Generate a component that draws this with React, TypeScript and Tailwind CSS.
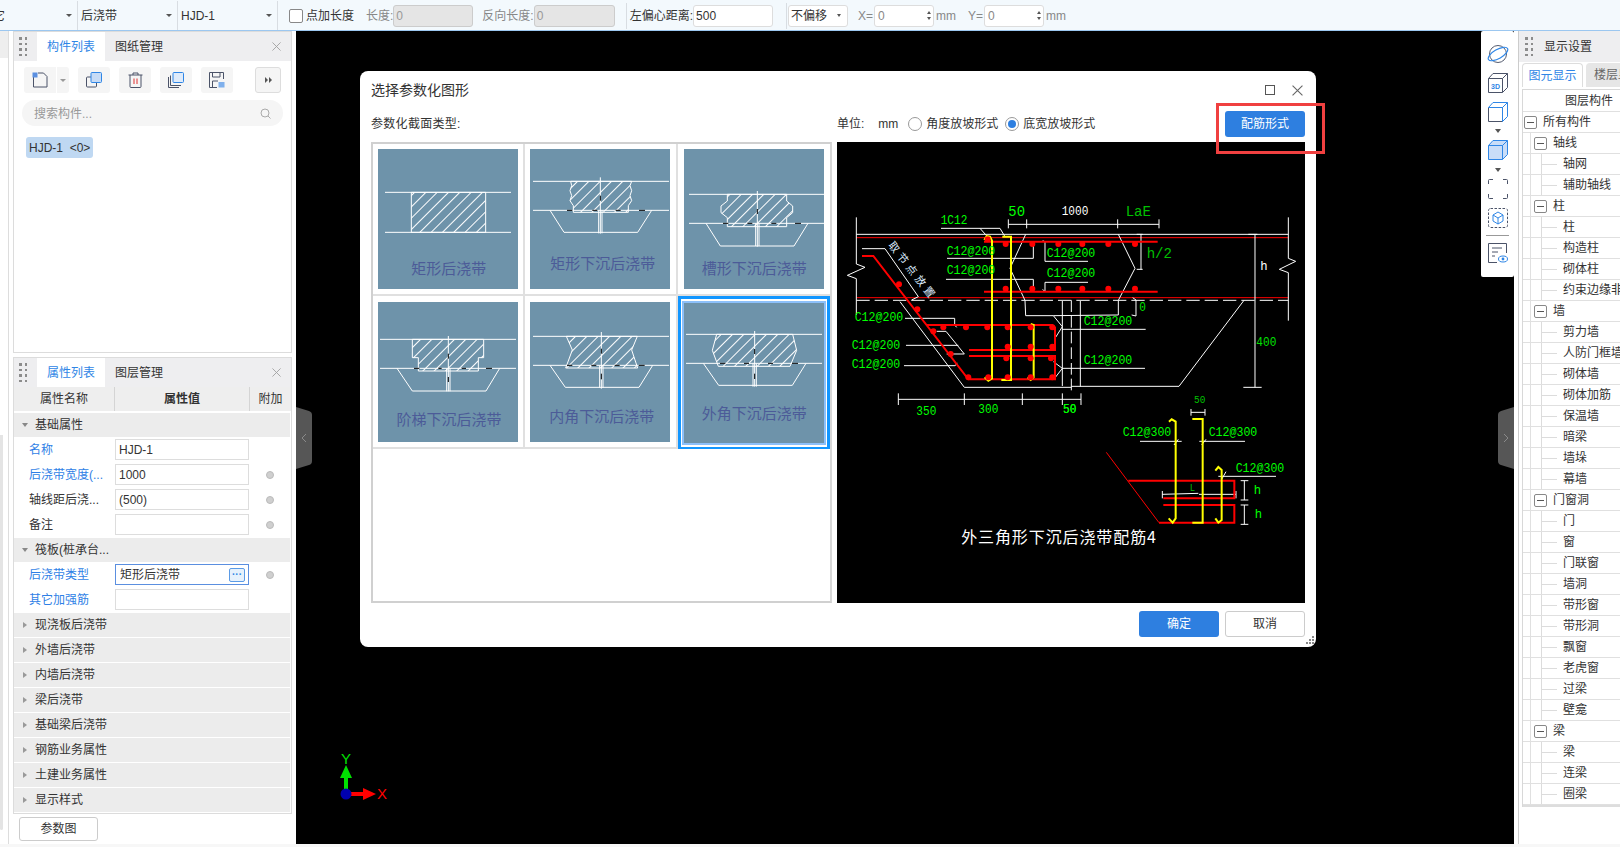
import React from "react";

const BLUE = "#2e7fe0";

// section thumbnails, coordinates are 3x of the 140px tile
const thumbs = [
  {
    label: "矩形后浇带", lx: 212, ly: 354,
    lines: [[21, 130, 399, 130], [21, 250, 399, 250]],
    hatch: "100,130 323,130 323,250 100,250",
    extra: "",
    dashes: [] as number[][],
  },
  {
    label: "矩形下沉后浇带", lx: 218, ly: 339,
    lines: [[9, 97, 417, 97], [9, 184, 417, 184], [211, 85, 211, 254], [206, 184, 206, 253], [216, 184, 216, 253]],
    hatch: "122,97 305,97 300,110 305,125 300,140 305,155 295,170 295,190 130,190 130,170 120,155 125,140 120,125 125,110",
    extra: "60,184 102,250 323,250 365,184",
    dashes: [[111, 184, 127, 184], [187, 184, 202, 184], [257, 184, 272, 184], [327, 184, 345, 184], [211, 140, 211, 155]],
  },
  {
    label: "槽形下沉后浇带", lx: 211, ly: 354,
    lines: [[15, 136, 420, 136], [15, 223, 420, 223], [220, 126, 220, 293], [215, 223, 215, 291], [225, 223, 225, 291]],
    hatch: "130,136 308,136 308,156 326,171 326,191 308,206 308,233 130,233 130,206 111,191 111,171 130,156",
    extra: "66,223 109,291 330,291 372,223",
    dashes: [[117, 223, 133, 223], [190, 223, 205, 223], [262, 223, 277, 223], [333, 223, 351, 223], [220, 180, 220, 195]],
  },
  {
    label: "阶梯下沉后浇带", lx: 213, ly: 350,
    lines: [[6, 112, 414, 112], [6, 199, 414, 199], [211, 102, 211, 268], [206, 199, 206, 268], [216, 199, 216, 268]],
    hatch: "103,112 317,112 317,167 301,167 301,207 121,207 121,167 103,167",
    extra: "57,199 103,267 324,267 365,199",
    dashes: [[108, 199, 124, 199], [181, 199, 191, 199], [251, 199, 264, 199], [324, 199, 342, 199], [211, 155, 211, 170], [211, 225, 211, 240]],
  },
  {
    label: "内角下沉后浇带", lx: 215, ly: 340,
    lines: [[9, 103, 417, 103], [9, 190, 417, 190], [214, 90, 214, 260], [209, 190, 209, 257], [219, 190, 219, 257]],
    hatch: "109,103 322,103 305,144 323,198 107,198 127,144",
    extra: "60,190 106,256 327,256 368,190",
    dashes: [[111, 190, 127, 190], [184, 190, 199, 190], [254, 190, 269, 190], [326, 190, 344, 190], [214, 140, 214, 155], [214, 215, 214, 232]],
  },
  {
    label: "外角下沉后浇带", lx: 211, ly: 327,
    lines: [[6, 94, 414, 94], [6, 181, 414, 181], [212, 84, 212, 251], [207, 181, 207, 251], [217, 181, 217, 251]],
    hatch: "98,94 326,94 338,142 318,190 103,190 85,142",
    extra: "58,181 104,247 325,247 366,181",
    dashes: [[108, 181, 124, 181], [180, 181, 195, 181], [252, 181, 267, 181], [324, 181, 342, 181], [212, 138, 212, 153], [212, 212, 212, 228]],
  },
];

function Thumb({ t, i }: { t: (typeof thumbs)[number]; i: number }) {
  return (
    <svg viewBox="0 0 420 420" className="block w-[140px] h-[140px] bg-[#6e93aa]">
      <defs>
        <pattern id={"hatch" + i} width="24" height="24" patternUnits="userSpaceOnUse" patternTransform="rotate(-45)">
          <line x1="0" y1="1.5" x2="24" y2="1.5" stroke="#fff" strokeWidth="3" />
        </pattern>
      </defs>
      <polygon points={t.hatch} fill={"url(#hatch" + i + ")"} stroke="#fff" strokeWidth="3" />
      {t.extra && <polyline points={t.extra} fill="none" stroke="#fff" strokeWidth="3" />}
      {t.lines.map((l, k) => (
        <line key={k} x1={l[0]} y1={l[1]} x2={l[2]} y2={l[3]} stroke="#fff" strokeWidth="3" />
      ))}
      {t.dashes.map((l, k) => (
        <line key={k} x1={l[0]} y1={l[1]} x2={l[2]} y2={l[3]} stroke="#000" strokeWidth="3" />
      ))}
      <text x={t.lx} y={t.ly} textAnchor="middle" dominantBaseline="central" fontSize="45" fill="#4c5b98" fontFamily="'Noto Sans CJK SC', sans-serif">
        {t.label}
      </text>
    </svg>
  );
}

function Cad({ x, y, s, w, fill = "#00ff00", size = 38 }: { x: number; y: number; s: string; w: number; fill?: string; size?: number }) {
  return (
    <text x={x} y={y} textAnchor="middle" dominantBaseline="central" fontSize={size} textLength={w} lengthAdjust="spacingAndGlyphs" fill={fill} fontFamily="'Liberation Mono', monospace">
      {s}
    </text>
  );
}

// white leader and dimension lines of the big drawing
const whiteLines = [
  "49,82 49,222 75,232 22,256 49,266 49,375",
  "1345,82 1345,205 1367,214 1318,238 1345,248 1345,392",
  "49,133 1345,133",
  "505,103 957,103", "505,88 505,115", "560,88 560,115", "833,88 833,115", "957,88 957,115",
  "303,115 420,115 445,143", "420,115 480,115 495,140",
  "557,133 510,235 555,331 557,377 640,377 667,410 645,445",
  "835,133 885,235 835,331 835,375 640,377",
  "321,205 580,205 580,162", "318,268 580,268 580,296",
  "608,152 615,155 615,214 744,214", "608,298 615,305 615,277 744,277",
  "195,385 344,385 344,405 350,412", "198,466 355,466", "192,527 345,527 352,520",
  "290,424 318,424 373,492 320,492",
  "667,418 917,418", "667,535 915,535", "640,515 667,535 640,570",
  "667,333 667,588", "721,333 721,590",
  "180,335 373,592 694,592", "694,589 1017,589 1212,331",
  "66,176 135,176 235,320 215,330",
  "903,133 903,238", "890,133 908,133", "890,238 908,238",
  "1245,133 1245,592", "1225,133 1252,133", "1210,592 1265,592",
  "878,323 888,330 888,378 875,375",
  "175,628 723,628", "175,610 175,645", "373,610 373,645", "547,610 547,645", "667,610 667,645", "723,610 723,645",
];
const redThin = ["49,143 1345,143", "49,323 1345,323"];
const redThick = [
  "432,155 953,155", "432,305 953,305",
  "66,198 100,198 385,568 645,568 645,498 387,498",
  "258,405 637,405 645,412 645,480 387,480",
];
const dots = [
  [443, 148], [497, 162], [577, 162], [655, 162], [727, 162], [805, 162], [885, 162],
  [497, 296], [577, 296], [655, 296], [727, 296], [805, 296], [885, 296],
  [177, 283], [232, 358], [280, 424], [332, 492], [385, 562],
  [310, 412], [378, 412], [442, 412], [503, 412], [572, 412], [637, 412],
  [503, 470], [572, 470], [637, 470], [499, 505], [572, 505], [633, 505],
  [445, 562], [503, 562], [572, 562], [637, 562],
];
const yellow = [
  "433,150 440,138 450,140 456,152 456,565 445,572 434,562",
  "487,140 513,140 513,570 484,570",
  "572,402 581,405 581,562 572,570 563,562",
];
const labels: [number, number][] = [
  [393, 184], [393, 243], [693, 192], [693, 252], [117, 382], [108, 466], [108, 523], [804, 394], [804, 511],
];

// small detail at the lower right, coordinates of the second crop
const w2 = [
  "420,154 545,154", "598,154 735,154", "655,259 828,259",
  "487,313 595,310", "597,313 708,313", "487,303 487,325", "708,303 708,325",
  "573,67 615,67", "573,57 573,77", "615,57 615,77",
  "733,272 733,330", "722,272 745,272", "722,330 745,330",
  "733,345 733,403", "722,345 745,345", "722,403 745,403",
  "522,165 535,148", "605,165 618,148", "665,268 678,245",
];
const r2 = [
  "385,272 703,272 703,325 490,325", "490,345 703,345 703,398 477,398",
];
const y2 = [
  "507,95 515,88 527,95 527,385 518,398 506,385",
  "577,87 608,87 608,398 577,398",
  "646,242 655,231 665,240 665,390 655,398 646,385",
];

function Drawing() {
  return (
    <svg viewBox="837 142 468 461" className="block w-[468px] h-[461px] bg-black">
      <g transform="translate(840 190) scale(0.33333)">
        {redThin.map((p) => <polyline key={p} points={p} fill="none" stroke="#ff0000" strokeWidth="3" />)}
        <line x1="49" y1="331" x2="1345" y2="331" stroke="#fff" strokeWidth="3" strokeDasharray="40 15" />
        {whiteLines.map((p) => <polyline key={p} points={p} fill="none" stroke="#fff" strokeWidth="3" />)}
        <line x1="694" y1="331" x2="694" y2="605" stroke="#fff" strokeWidth="3" strokeDasharray="35 12" />
        {redThick.map((p) => <polyline key={p} points={p} fill="none" stroke="#ff0000" strokeWidth="6" />)}
        {yellow.map((p) => <polyline key={p} points={p} fill="none" stroke="#ffff00" strokeWidth="6" />)}
        {dots.map((d, i) => <circle key={i} cx={d[0]} cy={d[1]} r="9" fill="#ff0000" />)}
        {labels.map((l, i) => <Cad key={i} x={l[0]} y={l[1]} s="C12@200" w={146} />)}
        <Cad x={530} y={66} s="50" w={50} size={44} />
        <Cad x={705} y={66} s="1000" w={80} fill="#fff" />
        <Cad x={895} y={65} s="LaE" w={76} size={46} fill="#00c000" />
        <Cad x={342} y={92} s="1C12" w={80} />
        <Cad x={958} y={192} s="h/2" w={76} size={46} fill="#00c000" />
        <Cad x={1272} y={230} s="h" w={22} fill="#fff" />
        <Cad x={1279} y={457} s="400" w={60} fill="#00e000" />
        <Cad x={908} y={354} s="0" w={20} fill="#00e000" />
        <Cad x={259} y={666} s="350" w={60} />
        <Cad x={445} y={660} s="300" w={60} />
        <Cad x={689} y={660} s="50" w={40} />
        <Cad x={1079} y={630} s="50" w={34} size={32} fill="#00c000" />
        <text transform="translate(220 242) rotate(52)" textAnchor="middle" dominantBaseline="central" fontSize="32" letterSpacing="11" fill="#dcecff" fontFamily="'Noto Sans CJK SC', sans-serif">
          取节点放置
        </text>
      </g>
      <g transform="translate(1000 390) scale(0.33333)">
        <line x1="319" y1="187" x2="477" y2="398" stroke="#ff0000" strokeWidth="3" />
        {w2.map((p) => <polyline key={p} points={p} fill="none" stroke="#fff" strokeWidth="3" />)}
        {r2.map((p) => <polyline key={p} points={p} fill="none" stroke="#ff0000" strokeWidth="6" />)}
        {y2.map((p) => <polyline key={p} points={p} fill="none" stroke="#ffff00" strokeWidth="6" />)}
        <Cad x={441} y={127} s="C12@300" w={146} />
        <Cad x={699} y={127} s="C12@300" w={146} />
        <Cad x={780} y={236} s="C12@300" w={146} />
        <Cad x={577} y={293} s="L" w={16} size={32} fill="#00c000" />
        <Cad x={772} y={302} s="h" w={22} />
        <Cad x={775} y={374} s="h" w={22} />
        <Cad x={209} y={60} s="50" w={40} />
      </g>
      <text x="1059" y="536" textAnchor="middle" dominantBaseline="central" fontSize="16" letterSpacing="0.9" fill="#fff" fontFamily="'Noto Sans CJK SC', sans-serif">
        外三角形下沉后浇带配筋4
      </text>
    </svg>
  );
}

function Grip() {
  return (
    <div className="grid grid-cols-2 gap-x-[3px] gap-y-[3px] w-[8px]">
      {[0, 1, 2, 3, 4, 5, 6, 7].map((i) => <span key={i} className="w-[2.5px] h-[2.5px] bg-[#8c8c8c]" />)}
    </div>
  );
}

function CloseX({ size = 9, color = "#a0a0a0" }: { size?: number; color?: string }) {
  return (
    <svg width={size} height={size} viewBox="0 0 10 10" className="shrink-0">
      <path d="M0.5 0.5L9.5 9.5M9.5 0.5L0.5 9.5" stroke={color} strokeWidth="1" fill="none" />
    </svg>
  );
}

function PanelHeader({ active, other }: { active: string; other: string }) {
  return (
    <div className="flex items-stretch h-[29px] bg-[#eeeef0] shrink-0 text-[12px]">
      <div className="flex items-center pl-[5px] w-[23px]"><Grip /></div>
      <div className="flex items-center justify-center w-[68px] bg-white text-[#2f86e6]">{active}</div>
      <div className="flex items-center pl-[10px] text-[#333]">{other}</div>
      <div className="flex items-center ml-auto pr-[10px]"><CloseX /></div>
    </div>
  );
}

function ToolBtn({ children }: { children: React.ReactNode }) {
  return <div className="flex items-center justify-center w-[32px] h-[26px] bg-[#f5f5f5] rounded-[3px]">{children}</div>;
}

const ink = "#4b5368";

function ComponentPanel() {
  return (
    <div className="flex flex-col h-[322px] border border-[#dcdcdc] bg-white">
      <PanelHeader active="构件列表" other="图纸管理" />
      <div className="flex items-center pl-[10px] pt-[6px]">
        <div className="flex w-[45px] h-[26px] mr-[9px]">
          <div className="flex items-center justify-center w-[32px] bg-[#f5f5f5] rounded-l-[3px]">
            <svg width="16" height="16" viewBox="0 0 16 16">
              <path d="M1.5 5V15H15V4.5L11.5 1H6" fill="none" stroke={ink} />
              <rect x="0.5" y="0.5" width="5" height="5" fill="#5b8fe0" />
            </svg>
          </div>
          <div className="flex items-center justify-center flex-1 ml-[1px] bg-[#f5f5f5] rounded-r-[3px]">
            <span className="border-x-[3px] border-x-transparent border-t-[3px] border-t-[#999]" />
          </div>
        </div>
        <div className="flex gap-[9px]">
          <ToolBtn>
            <svg width="16" height="16" viewBox="0 0 16 16">
              <rect x="0.5" y="5" width="10" height="10" rx="1" fill="none" stroke={ink} />
              <rect x="5" y="0.5" width="10.5" height="10" rx="1" fill="#c6dbf6" stroke="#2f86e6" />
            </svg>
          </ToolBtn>
          <ToolBtn>
            <svg width="15" height="16" viewBox="0 0 15 16">
              <path d="M0.5 3H14.5M5 3V1H10V3M2 3V14.5A1 1 0 003 15.5H12A1 1 0 0013 14.5V3" fill="none" stroke={ink} />
              <path d="M6 6.5V12M9 6.5V12" stroke="#e03030" />
            </svg>
          </ToolBtn>
          <ToolBtn>
            <svg width="16" height="16" viewBox="0 0 16 16">
              <path d="M0.5 5V15.5H11M2.5 3.5V13.5H13" fill="none" stroke={ink} />
              <rect x="5" y="0.5" width="10.5" height="10" rx="1" fill="#dfebfa" stroke="#2f86e6" />
            </svg>
          </ToolBtn>
          <ToolBtn>
            <svg width="16" height="16" viewBox="0 0 16 16">
              <path d="M14.5 7V0.5H0.5V15.5H8" fill="none" stroke={ink} />
              <path d="M3.5 0.5V5H11V0.5M3.5 15.5V9H9" fill="none" stroke={ink} />
              <rect x="9.5" y="10" width="6" height="5.5" fill="#7fb0ec" />
            </svg>
          </ToolBtn>
        </div>
        <div className="flex items-center justify-center gap-[1px] w-[26px] h-[26px] ml-[22px] bg-[#f5f5f5] border border-[#ddd] rounded-[3px]">
          <span className="border-y-[3px] border-y-transparent border-l-[3px] border-l-[#555]" />
          <span className="border-y-[3px] border-y-transparent border-l-[3px] border-l-[#555]" />
        </div>
      </div>
      <div className="flex items-center h-[26px] mx-[8px] mt-[7px] pl-[12px] pr-[12px] pt-[1px] bg-[#f5f5f5] rounded-full text-[12px] text-[#999]">
        <span>搜索构件...</span>
        <svg width="11" height="11" viewBox="0 0 11 11" className="ml-auto">
          <circle cx="5" cy="5" r="4" fill="none" stroke="#aaa" />
          <path d="M8 8L10.5 10.5" stroke="#aaa" />
        </svg>
      </div>
      <div className="flex items-center self-start h-[21px] ml-[12px] mt-[11px] px-[3px] bg-[#bfd8f2] rounded-[3px] text-[12px] text-[#333] whitespace-pre">
        {"HJD-1  <0>"}
      </div>
    </div>
  );
}

function Section({ title, open }: { title: string; open?: boolean }) {
  return (
    <div className="flex items-center h-[24px] mb-[1px] w-[276px] shrink-0 bg-[#ececec] text-[12px] text-[#333]">
      <div className="flex items-center justify-center w-[21px]">
        {open ? (
          <span className="border-x-[3px] border-x-transparent border-t-[4px] border-t-[#888]" />
        ) : (
          <span className="border-y-[3px] border-y-transparent border-l-[4px] border-l-[#999]" />
        )}
      </div>
      <span>{title}</span>
    </div>
  );
}

function Row({ name, value, link, dot, children }: { name: string; value?: string; link?: boolean; dot?: boolean; children?: React.ReactNode }) {
  return (
    <div className="flex items-center h-[25px] pb-[2px] shrink-0 text-[12px]">
      <div className={"w-[101px] pl-[15px] whitespace-nowrap " + (link ? "text-[#2f7fe6]" : "text-[#333]")}>{name}</div>
      {children ?? (
        <div className="flex items-center w-[134px] h-[21px] pl-[3px] border border-[#ddd] text-[#333]">{value}</div>
      )}
      <div className="flex justify-center w-[41px]">
        {dot && <span className="w-[8px] h-[8px] rounded-full bg-[#cfcfcf] border border-[#bbb]" />}
      </div>
    </div>
  );
}

function PropertyPanel() {
  return (
    <div className="flex flex-col h-[457px] border border-[#dcdcdc] bg-white">
      <PanelHeader active="属性列表" other="图层管理" />
      <div className="flex h-[24px] mb-[2px] shrink-0 w-[277px] bg-[#eeeeee] text-[12px] text-[#333]">
        <div className="flex items-center justify-center w-[101px] border-r border-[#d4d4d4]">属性名称</div>
        <div className="flex items-center justify-center w-[135px] border-r border-[#d4d4d4] font-bold">属性值</div>
        <div className="flex items-center justify-center w-[41px]">附加</div>
      </div>
      <Section title="基础属性" open />
      <Row name="名称" value="HJD-1" link />
      <Row name="后浇带宽度(..." value="1000" link dot />
      <Row name="轴线距后浇..." value="(500)" dot />
      <Row name="备注" dot />
      <Section title="筏板(桩承台..." open />
      <Row name="后浇带类型" link dot>
        <div className="flex items-center justify-between w-[134px] h-[21px] pl-[4px] pr-[3px] border border-[#5b8fe0] text-[#333]">
          <span>矩形后浇带</span>
          <span className="flex items-center justify-center w-[16px] h-[14px] rounded-[2px] bg-[#e6f1fc] border border-[#5b9be6] text-[#2f86e6] text-[10px] leading-none font-bold">···</span>
        </div>
      </Row>
      <Row name="其它加强筋" link />
      {["现浇板后浇带", "外墙后浇带", "内墙后浇带", "梁后浇带", "基础梁后浇带", "钢筋业务属性", "土建业务属性", "显示样式"].map((s) => (
        <Section key={s} title={s} />
      ))}
    </div>
  );
}

function LeftSidebar() {
  return (
    <div className="flex w-[296px] h-full shrink-0 bg-white">
      <div className="w-[9px] border-r border-[#ddd] h-full">
        <div className="h-[27px] bg-[#eeeeee]" />
        <div className="w-[3px] h-[395px] mt-[377px] bg-[#e4e4e4] rounded-b-[2px]" />
      </div>
      <div className="flex flex-col w-[279px] ml-[4px]">
        <ComponentPanel />
        <div className="h-[4px]" />
        <PropertyPanel />
        <div className="flex items-center justify-center w-[79px] h-[24px] ml-[6px] mt-[3px] bg-white border border-[#ccc] rounded-[3px] text-[12px] text-[#333]">参数图</div>
      </div>
    </div>
  );
}

function Radio({ on }: { on?: boolean }) {
  return (
    <span className="flex items-center justify-center w-[14px] h-[14px] rounded-full bg-white border border-[#999] shrink-0">
      {on && <span className="w-[8px] h-[8px] rounded-full bg-[#2e7fe0]" />}
    </span>
  );
}

function Dialog() {
  return (
    <div className="absolute left-[64px] top-[40px] w-[956px] h-[576px] flex flex-col px-[11px] bg-white rounded-[8px] text-[12px] text-[#333]">
      <div className="flex items-center h-[38px] shrink-0">
        <span className="text-[14px]">选择参数化图形</span>
        <div className="flex items-center gap-[17px] ml-auto mr-[2px]">
          <span className="w-[10px] h-[10px] border border-[#555]" />
          <CloseX size={11} color="#666" />
        </div>
      </div>
      <div className="flex gap-[5px] flex-1 min-h-0">
        <div className="flex flex-col w-[461px]">
          <div className="flex items-center h-[30px] mb-[3px] text-[12px] tracking-[0.3px]">参数化截面类型:</div>
          <div className="h-[461px] border-2 border-[#d0d0d0] border-r-[#d8d8d8]">
            <div className="grid grid-cols-3 w-[457px]">
              {thumbs.map((t, i) => (
                <div key={t.label} className={"flex items-center justify-center border-b-2 border-[#e0e0e0] " + (i < 3 ? "h-[152px] " : "h-[153px] ") + (i % 3 < 2 ? "border-r-2 " : "") + (i === 5 ? "border-[3px] !border-[#1296ff] " : "")}>
                  {i === 5 ? (
                    <div className="border-[2px] border-[#8cc0fa]"><Thumb t={t} i={i} /></div>
                  ) : (
                    <Thumb t={t} i={i} />
                  )}
                </div>
              ))}
            </div>
          </div>
        </div>
        <div className="flex flex-col w-[468px]">
          <div className="flex items-center h-[26px] mt-[2px] mb-[5px]">
            <span>单位:</span>
            <span className="ml-[14px] mr-[10px]">mm</span>
            <Radio />
            <span className="ml-[4px] mr-[7px]">角度放坡形式</span>
            <Radio on />
            <span className="ml-[4px]">底宽放坡形式</span>
            <button className="ml-auto w-[80px] h-[26px] rounded-[3px] bg-[#2e7fe0] text-white text-[12px]">配筋形式</button>
          </div>
          <Drawing />
        </div>
      </div>
      <div className="flex justify-end gap-[6px] h-[44px] pt-[8px] shrink-0">
        <button className="w-[80px] h-[26px] rounded-[3px] text-white text-[12px]" style={{ background: BLUE }}>确定</button>
        <button className="w-[80px] h-[26px] rounded-[3px] bg-white border border-[#ccc] text-[12px]">取消</button>
      </div>
      <svg width="9" height="9" viewBox="0 0 9 9" className="absolute right-[2px] bottom-[2px]">
        <path d="M7 0h2v2H7zM4 3h2v2H4zM7 3h2v2H7zM1 6h2v2H1zM4 6h2v2H4zM7 6h2v2H7z" fill="#888" />
      </svg>
    </div>
  );
}

function AxisMark() {
  return (
    <svg width="60" height="60" viewBox="0 0 60 60" className="absolute left-[33px] bottom-[34px]">
      <path d="M17 40V26" stroke="#00e000" strokeWidth="4" />
      <path d="M17 15L23 28H11Z" fill="#00e000" />
      <path d="M17 44H36" stroke="#ff0000" strokeWidth="4" />
      <path d="M47 44L34 38V50Z" fill="#ff0000" />
      <circle cx="17" cy="44" r="5.5" fill="#0000b0" />
      <text x="17" y="14" textAnchor="middle" fontSize="15" fill="#00e000" fontFamily="'Liberation Sans', sans-serif">Y</text>
      <text x="53" y="49" textAnchor="middle" fontSize="15" fill="#ff0000" fontFamily="'Liberation Sans', sans-serif">X</text>
    </svg>
  );
}

function IconStrip() {
  return (
    <div className="absolute right-0 top-0 flex flex-col items-center w-[33px] h-[246px] pt-[13px] bg-white rounded-[2px]">
      <svg width="22" height="20" viewBox="0 0 22 20">
        <circle cx="11" cy="10" r="8.5" fill="none" stroke="#555c70" />
        <ellipse cx="11" cy="10" rx="11" ry="4.5" fill="none" stroke="#2f86e6" strokeWidth="1.2" transform="rotate(-30 11 10)" />
      </svg>
      <svg width="20" height="20" viewBox="0 0 20 20" className="mt-[9px]">
        <path d="M0.5 5.5H14.5V19.5H0.5ZM0.5 5.5L5 0.5H19.5V14.5L14.5 19.5M14.5 5.5L19.5 0.5" fill="none" stroke={ink} />
        <text x="7.5" y="16" textAnchor="middle" fontSize="7" fontWeight="bold" fill="#2f86e6" fontFamily="'Liberation Sans', sans-serif">3D</text>
      </svg>
      <svg width="20" height="20" viewBox="0 0 20 20" className="mt-[9px]">
        <path d="M0.5 5.5V19.5H14.5V5.5" fill="none" stroke={ink} />
        <path d="M0.5 5.5L5 0.5H19.5V14.5L14.5 19.5V5.5H0.5M14.5 5.5L19.5 0.5" fill="none" stroke="#2f86e6" />
      </svg>
      <span className="mt-[7px] border-x-[3px] border-x-transparent border-t-[4px] border-t-[#555]" />
      <svg width="20" height="20" viewBox="0 0 20 20" className="mt-[7px]">
        <path d="M0.5 5.5L5 0.5H19.5V14.5L14.5 19.5H0.5Z" fill="#c9ddf8" stroke="#2f86e6" />
        <path d="M0.5 5.5H14.5V19.5M14.5 5.5L19.5 0.5" fill="none" stroke="#2f86e6" />
      </svg>
      <span className="mt-[8px] border-x-[3px] border-x-transparent border-t-[4px] border-t-[#555]" />
      <svg width="20" height="20" viewBox="0 0 20 20" className="mt-[7px]">
        <path d="M0.5 5V1.5A1 1 0 011.5 0.5H5M15 0.5H18.5A1 1 0 0119.5 1.5V5M19.5 15V18.5A1 1 0 0118.5 19.5H15M5 19.5H1.5A1 1 0 010.5 18.5V15" fill="none" stroke={ink} />
      </svg>
      <svg width="20" height="20" viewBox="0 0 20 20" className="mt-[9px]">
        <rect x="0.5" y="0.5" width="19" height="19" rx="2" fill="none" stroke={ink} strokeDasharray="2.5 1.5" />
        <path d="M10 4L15 7V13L10 16L5 13V7ZM5 7L10 10L15 7M10 10V16" fill="none" stroke="#2f86e6" />
      </svg>
      <div className="w-[23px] h-[1px] mt-[7px] bg-[#999]" />
      <svg width="20" height="20" viewBox="0 0 20 20" className="mt-[7px]">
        <path d="M9 19.5H0.5V0.5H18.5V10" fill="none" stroke={ink} />
        <path d="M4 5H14M4 9H10M4 13H7" stroke={ink} />
        <ellipse cx="15" cy="16" rx="4.5" ry="3" fill="#fff" stroke="#2f86e6" />
        <circle cx="15" cy="16" r="1.4" fill="#2f86e6" />
      </svg>
    </div>
  );
}

// side handles on the canvas edge
function Handle({ side }: { side: "left" | "right" }) {
  const left = side === "left";
  return (
    <svg width="16" height="62" viewBox="0 0 16 62" className={"absolute top-[376px] " + (left ? "left-0" : "right-0")}>
      <path d={left ? "M0 0L13 4Q16 5 16 8V54Q16 57 13 58L0 62Z" : "M16 0L3 4Q0 5 0 8V54Q0 57 3 58L16 62Z"} fill="#565656" />
      <path d={left ? "M10 27L6 31L10 35" : "M6 27L10 31L6 35"} fill="none" stroke="#8a8a8a" />
    </svg>
  );
}

const tree: [number, string][] = [
  [0, "所有构件"], [1, "轴线"], [2, "轴网"], [2, "辅助轴线"], [1, "柱"], [2, "柱"], [2, "构造柱"], [2, "砌体柱"], [2, "约束边缘非阴影区"],
  [1, "墙"], [2, "剪力墙"], [2, "人防门框墙"], [2, "砌体墙"], [2, "砌体加筋"], [2, "保温墙"], [2, "暗梁"], [2, "墙垛"], [2, "幕墙"],
  [1, "门窗洞"], [2, "门"], [2, "窗"], [2, "门联窗"], [2, "墙洞"], [2, "带形窗"], [2, "带形洞"], [2, "飘窗"], [2, "老虎窗"], [2, "过梁"], [2, "壁龛"],
  [1, "梁"], [2, "梁"], [2, "连梁"], [2, "圈梁"],
];

function MinusBox() {
  return (
    <span className="flex items-center justify-center w-[13px] h-[13px] shrink-0 bg-white border border-[#888] rounded-[2px]">
      <span className="w-[7px] h-[1px] bg-[#555]" />
    </span>
  );
}

function TreeRow({ level, text }: { level: number; text: string }) {
  return (
    <div className="relative flex items-center h-[21px] border-b border-[#e0e0e0] whitespace-nowrap text-[12px] text-[#333]">
      {level > 0 && <span className="absolute left-[7px] top-0 bottom-0 w-[1px] bg-[#e0e0e0]" />}
      {level === 2 && (
        <>
          <span className="absolute left-[18px] top-0 bottom-0 w-[1px] bg-[#dcdcdc]" />
          <span className="absolute left-[18px] top-[10px] w-[16px] h-[1px] bg-[#dcdcdc]" />
        </>
      )}
      {level === 0 && <span className="ml-[1px] mr-[6px] flex"><MinusBox /></span>}
      {level === 1 && <span className="ml-[11px] mr-[6px] z-10 flex"><MinusBox /></span>}
      <span className={level === 2 ? "ml-[40px]" : ""}>{text}</span>
    </div>
  );
}

function RightPanel() {
  return (
    <div className="flex w-[106px] h-full shrink-0 pl-[4px] bg-white">
      <div className="flex flex-col w-[102px] h-full bg-white border-l border-[#ccc] overflow-hidden">
        <div className="flex items-center h-[31px] shrink-0 pl-[6px] bg-[#eeeef0] text-[12px] text-[#333]">
          <Grip />
          <span className="ml-[11px] whitespace-nowrap">显示设置</span>
        </div>
        <div className="flex h-[24px] mt-[1px] pl-[3px] shrink-0 text-[12px] whitespace-nowrap">
          <div className="flex items-center justify-center w-[61px] shrink-0 border border-[#ddd] border-b-0 rounded-t-[4px] text-[#2f86e6]">图元显示</div>
          <div className="flex items-center pl-[8px] ml-[3px] w-[60px] shrink-0 bg-[#e6e6e6] rounded-t-[4px] text-[#666]">楼层显示</div>
        </div>
        <div className="ml-[3px] mt-[2px] border-l border-t border-[#d8d8d8]">
          <div className="flex items-center h-[22px] pl-[42px] border-b border-[#e0e0e0] text-[12px] text-[#333] whitespace-nowrap">图层构件</div>
          {tree.map((r, i) => <TreeRow key={i} level={r[0]} text={r[1]} />)}
          <div className="h-[2px] bg-[#dddddd]" />
        </div>
      </div>
    </div>
  );
}

function Sep() {
  return <span className="w-[1px] h-[29px] bg-[#d8dde2] shrink-0" />;
}

function Combo({ text, w }: { text: string; w: string }) {
  return (
    <div className={"flex items-center justify-between h-[29px] pl-[3px] pr-[5px] shrink-0 " + w}>
      <span>{text}</span>
      <span className="border-x-[3px] border-x-transparent border-t-[3px] border-t-[#555]" />
    </div>
  );
}

function Num({ v }: { v: string }) {
  return (
    <div className="flex items-center justify-between w-[60px] h-[22px] pl-[3px] pr-[2px] bg-white border border-[#ddd] rounded-[3px] text-[#888]">
      <span>{v}</span>
      <span className="flex flex-col gap-[3px]">
        <span className="border-x-[2.5px] border-x-transparent border-b-[3px] border-b-[#555]" />
        <span className="border-x-[2.5px] border-x-transparent border-t-[3px] border-t-[#555]" />
      </span>
    </div>
  );
}

function TopBar() {
  return (
    <div className="flex items-center h-[31px] shrink-0 pt-[1px] bg-[#f3f9fd] border-b border-[#9cc7f0] text-[12px] text-[#333] whitespace-nowrap overflow-hidden">
      <div className="flex items-center justify-between w-[77px] h-[29px] pr-[5px] shrink-0">
        <span className="-ml-[7px]">它</span>
        <span className="border-x-[3px] border-x-transparent border-t-[3px] border-t-[#555]" />
      </div>
      <Sep />
      <Combo text="后浇带" w="w-[99px]" />
      <Sep />
      <Combo text="HJD-1" w="w-[99px]" />
      <Sep />
      <span className="w-[14px] h-[14px] ml-[11px] bg-white border border-[#888] rounded-[2px] shrink-0" />
      <span className="ml-[3px]">点加长度</span>
      <span className="ml-[12px] text-[#888]">长度:</span>
      <span className="flex items-center w-[80px] h-[22px] pl-[2px] bg-[#e5e5e5] border border-[#ccc] rounded-[3px] text-[#999]">0</span>
      <span className="ml-[9px] text-[#888]">反向长度:</span>
      <span className="flex items-center w-[81px] h-[22px] pl-[2px] bg-[#e5e5e5] border border-[#ccc] rounded-[3px] text-[#999]">0</span>
      <span className="w-[1px] h-[26px] ml-[11px] bg-[#d8dde2]" />
      <span className="ml-[3px]">左偏心距离:</span>
      <span className="flex items-center w-[80px] h-[22px] pl-[2px] bg-white border border-[#ddd] rounded-[3px]">500</span>
      <span className="w-[1px] h-[26px] ml-[13px] bg-[#d8dde2]" />
      <span className="flex items-center justify-between w-[60px] h-[22px] ml-[1px] pl-[2px] pr-[6px] bg-white border border-[#ddd] rounded-[3px]">
        不偏移
        <span className="border-x-[2.5px] border-x-transparent border-t-[3px] border-t-[#555]" />
      </span>
      <span className="ml-[10px] mr-[1px] text-[#888]">X=</span>
      <Num v="0" />
      <span className="ml-[2px] text-[#888]">mm</span>
      <span className="ml-[12px] mr-[1px] text-[#888]">Y=</span>
      <Num v="0" />
      <span className="ml-[2px] text-[#888]">mm</span>
    </div>
  );
}

export default function App() {
  return (
    <div className="flex flex-col w-[1620px] h-[847px] overflow-hidden bg-white font-['Liberation_Sans','Noto_Sans_CJK_SC',sans-serif]">
      <TopBar />
      <div className="flex h-[813px] shrink-0">
        <LeftSidebar />
        <div className="relative flex-1 bg-black">
          <Handle side="left" />
          <Handle side="right" />
          <AxisMark />
          <Dialog />
          <IconStrip />
          {/* red mark drawn over the screenshot */}
          <div className="absolute left-[920px] top-[72px] w-[109px] h-[51px] border-[3px] border-[#f04040]" />
        </div>
        <RightPanel />
      </div>
      <div className="flex-1 bg-[#f7f7f7]" />
    </div>
  );
}
